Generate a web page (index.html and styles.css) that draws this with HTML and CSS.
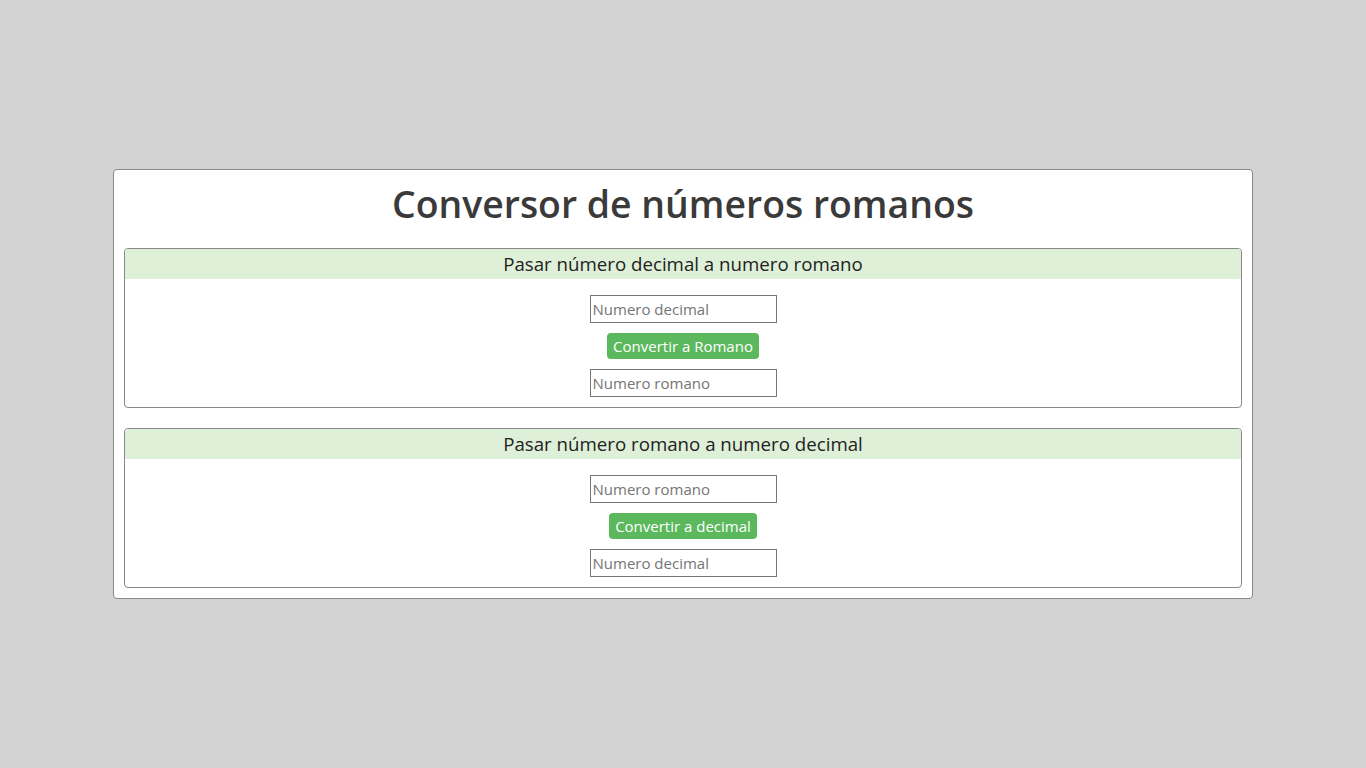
FILE: index.html
```html
<!DOCTYPE html>
<html lang="es">
<head>
<meta charset="utf-8">
<title>Conversor de números romanos</title>
<link rel="stylesheet" href="styles.css">
</head>
<body>
<main class="page">
  <div class="card">
    <h1 class="title">Conversor de números romanos</h1>
    <section class="panel">
      <h2 class="panel-head">Pasar número decimal a numero romano</h2>
      <div class="panel-body">
        <input class="field" type="text" placeholder="Numero decimal">
        <button class="btn" type="button">Convertir a Romano</button>
        <input class="field" type="text" placeholder="Numero romano">
      </div>
    </section>
    <section class="panel">
      <h2 class="panel-head">Pasar número romano a numero decimal</h2>
      <div class="panel-body">
        <input class="field" type="text" placeholder="Numero romano">
        <button class="btn" type="button">Convertir a decimal</button>
        <input class="field" type="text" placeholder="Numero decimal">
      </div>
    </section>
  </div>
</main>
</body>
</html>
```
FILE: styles.css
```css
* { box-sizing: border-box; }
html, body { margin: 0; height: 100%; }
body {
  background: #d3d3d3;
  font-family: "Open Sans", "Noto Sans", sans-serif;
  color: #333;
}
.page {
  min-height: 100%;
  display: flex;
  align-items: center;
  justify-content: center;
}
.card {
  width: 1140px;
  background: #fff;
  border: 1px solid #888;
  border-radius: 4px;
  padding: 10px;
  display: flex;
  flex-direction: column;
  gap: 20px;
}
.title {
  margin: 0;
  font-size: 37.4px;
  font-weight: 600;
  line-height: 48px;
  text-align: center;
  color: #3a3a3a;
}
.panel {
  border: 1px solid #888;
  border-radius: 4px;
}
.panel-head {
  margin: 0;
  height: 30px;
  background: #dff0d8;
  border-radius: 3px 3px 0 0;
  font-size: 18.7px;
  font-weight: 400;
  line-height: 30px;
  text-align: center;
  color: #222;
}
.panel-body {
  padding: 16px 0 10px;
  display: flex;
  flex-direction: column;
  align-items: center;
  gap: 10px;
}
.field {
  width: 187px;
  height: 28px;
  border: 1px solid #777;
  border-radius: 0;
  padding: 0 2px;
  font-family: inherit;
  font-size: 15px;
  color: #333;
  background: #fff;
}
.field::placeholder { color: #757575; }
.btn {
  height: 26px;
  border: none;
  border-radius: 4px;
  background: #5cb85c;
  color: #fff;
  font-family: inherit;
  font-size: 15px;
  padding: 0 6px;
  line-height: 26px;
}
```
